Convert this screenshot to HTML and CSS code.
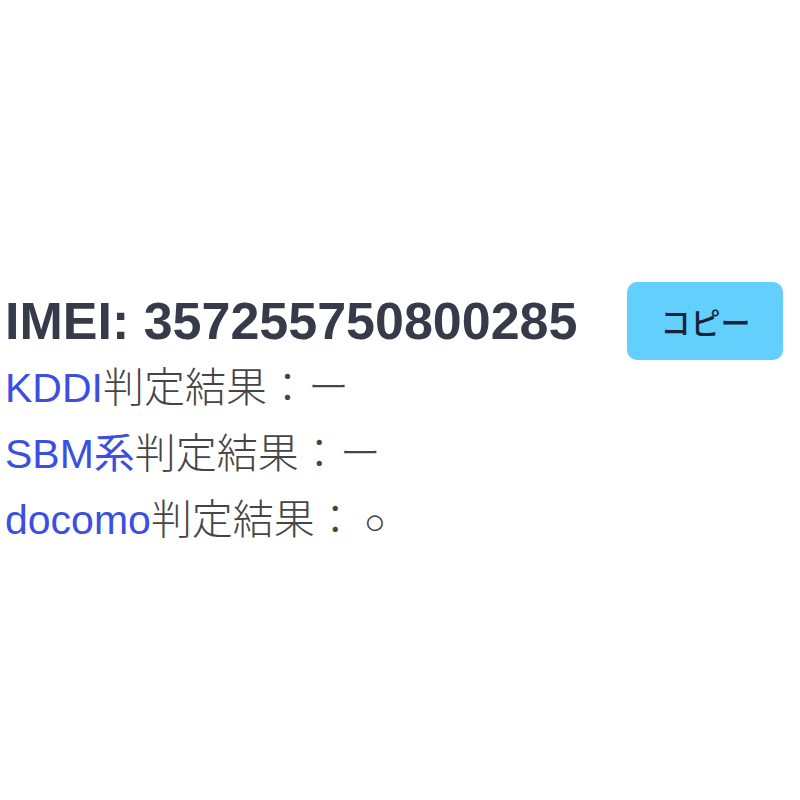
FILE: index.html
```html
<!DOCTYPE html>
<html lang="ja">
<head>
<meta charset="utf-8">
<link rel="stylesheet" href="styles.css">
</head>
<body>
<div class="page">
  <div class="imei-row">
    <h2 class="imei">IMEI: 357255750800285</h2>
    <button class="copy">コピー</button>
  </div>
  <div class="results">
    <p class="result"><span class="carrier">KDDI</span>判定結果：ー</p>
    <p class="result"><span class="carrier">SBM系</span>判定結果：ー</p>
    <p class="result"><span class="carrier">docomo</span>判定結果：<span class="mark">○</span></p>
  </div>
</div>
</body>
</html>
```
FILE: styles.css
```css
html, body {
  margin: 0;
  padding: 0;
  background: #ffffff;
}
.page {
  padding: 282px 0 0 5px;
  font-family: "Liberation Sans", "Noto Sans CJK JP", sans-serif;
}
.imei-row {
  display: flex;
  align-items: center;
  gap: 50px;
  height: 78px;
}
.imei {
  margin: 0;
  font-size: 52px;
  font-weight: bold;
  color: #373a48;
  line-height: 1;
}
.copy {
  width: 156px;
  height: 78px;
  border: none;
  border-radius: 10px;
  background: #62cffd;
  color: #16243a;
  font-family: "Noto Sans CJK JP", sans-serif;
  font-size: 30px;
  font-weight: 500;
  padding: 0;
}
.results {
  margin-top: -5px;
}
.result {
  margin: 0;
  font-size: 41px;
  line-height: 66px;
  color: #454545;
  font-weight: 300;
}
.carrier {
  color: #3b4fe0;
  font-weight: normal;
}
.mark {
  font-size: 36px;
  margin-left: 8px;
}
```
